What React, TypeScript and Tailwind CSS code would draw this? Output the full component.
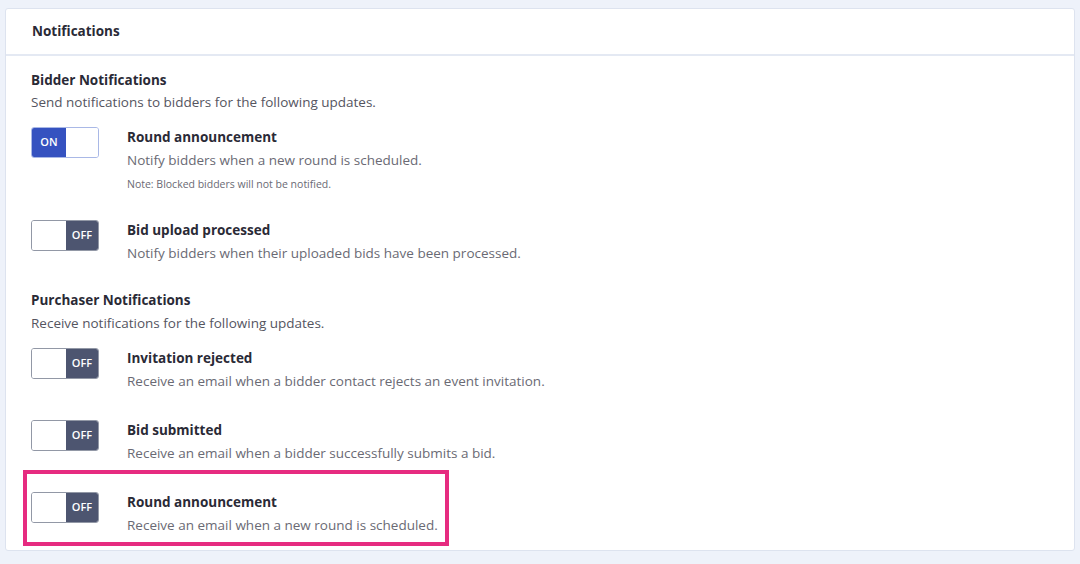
import React from 'react';

type Item = { title: string; desc: string; on?: boolean; note?: string };

const Toggle: React.FC<{ on?: boolean }> = ({ on }) =>
  on ? (
    <div className="flex w-[68px] h-[31px] rounded-[3px] border border-[#a9b8e6] overflow-hidden shrink-0">
      <div className="w-[34px] bg-[#3552c0] text-white text-[11px] font-semibold flex items-center justify-center">ON</div>
      <div className="flex-1 bg-white" />
    </div>
  ) : (
    <div className="flex w-[68px] h-[31px] rounded-[3px] border border-[#9298a6] overflow-hidden shrink-0">
      <div className="w-[34px] bg-white" />
      <div className="flex-1 bg-[#4d5570] text-white text-[11px] font-semibold flex items-center justify-center">OFF</div>
    </div>
  );

const Row: React.FC<{ item: Item }> = ({ item }) => (
  <div className="flex gap-7">
    <Toggle on={item.on} />
    <div className="pt-[1px]">
      <div className="text-[13.5px] font-bold text-[#2a2a36] leading-[18px]">{item.title}</div>
      <div className="text-[13.5px] text-[#6a6a74] leading-[18px] mt-[5px]">{item.desc}</div>
      {item.note && <div className="text-[10.5px] text-[#6a6a74] leading-[14px] mt-[8px]">{item.note}</div>}
    </div>
  </div>
);

const bidder: Item[] = [
  { title: 'Round announcement', desc: 'Notify bidders when a new round is scheduled.', on: true, note: 'Note: Blocked bidders will not be notified.' },
  { title: 'Bid upload processed', desc: 'Notify bidders when their uploaded bids have been processed.' },
];

const purchaser: Item[] = [
  { title: 'Invitation rejected', desc: 'Receive an email when a bidder contact rejects an event invitation.' },
  { title: 'Bid submitted', desc: 'Receive an email when a bidder successfully submits a bid.' },
  { title: 'Round announcement', desc: 'Receive an email when a new round is scheduled.' },
];

export default function App() {
  return (
    <div className="w-[1080px] h-[564px] bg-[#eef2fa] pt-[8px] px-[5px]" style={{ fontFamily: "'Open Sans', sans-serif" }}>
      <div className="relative bg-white border border-[#dde3ef] rounded-[3px] h-[543px]">
        <div className="h-[47px] border-b-2 border-[#e4e9f3] px-[26px] flex items-center">
          <span className="text-[13.5px] font-bold text-[#2a2a36]">Notifications</span>
        </div>

        <div className="px-[25px] pt-[15px]">
          <div className="text-[13.5px] font-bold text-[#2a2a36] leading-[18px]">Bidder Notifications</div>
          <div className="text-[13.5px] text-[#55555f] leading-[18px] mt-[4px]">Send notifications to bidders for the following updates.</div>

          <div className="mt-[16px] flex flex-col gap-[29px]">
            {bidder.map((b) => (
              <Row key={b.title} item={b} />
            ))}
          </div>

          <div className="text-[13.5px] font-bold text-[#2a2a36] leading-[18px] mt-[29px]">Purchaser Notifications</div>
          <div className="text-[13.5px] text-[#55555f] leading-[18px] mt-[5px]">Receive notifications for the following updates.</div>

          <div className="mt-[16px] flex flex-col gap-[30px]">
            {purchaser.map((p, i) => (
              <Row key={i} item={p} />
            ))}
          </div>
        </div>

        <div className="absolute left-[17px] top-[461px] w-[426px] h-[76px] border-4 border-[#e62b80] pointer-events-none" />
      </div>
    </div>
  );
}
